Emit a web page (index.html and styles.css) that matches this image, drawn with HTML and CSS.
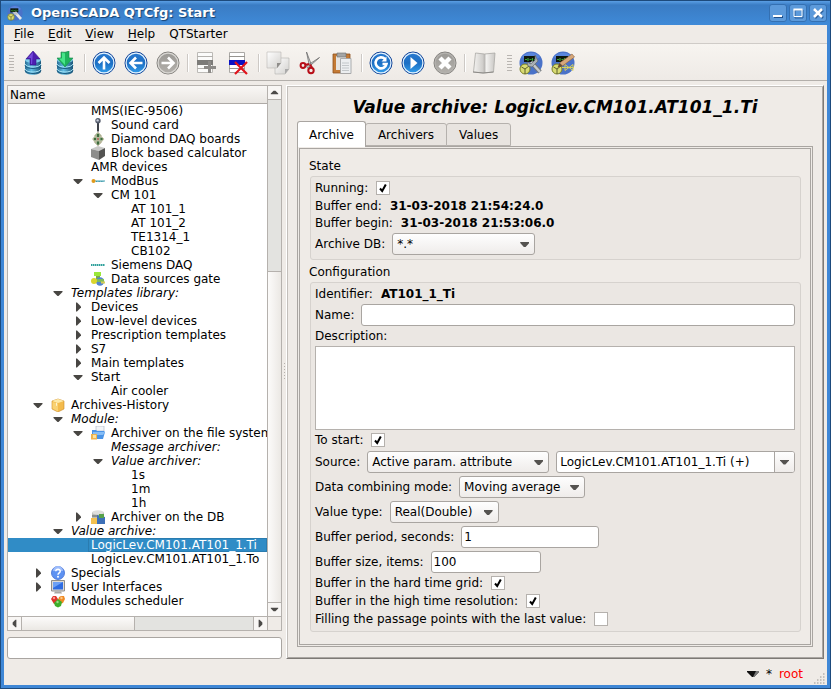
FILE: index.html
```html
<!DOCTYPE html>
<html lang="en">
<head>
<meta charset="utf-8">
<title>OpenSCADA QTCfg: Start</title>
<link rel="stylesheet" href="styles.css">
</head>
<body>
<svg class="defs" aria-hidden="true">
  <defs>
    <linearGradient id="gBlue" x1="0" y1="0" x2="0" y2="1"><stop offset="0" stop-color="#2a7ad0"/><stop offset=".5" stop-color="#1c6fc4"/><stop offset="1" stop-color="#35a2ee"/></linearGradient>
    <linearGradient id="gGrey" x1="0" y1="0" x2="0" y2="1"><stop offset="0" stop-color="#9a9894"/><stop offset="1" stop-color="#b4b1ac"/></linearGradient>
    <linearGradient id="gCyl" x1="0" y1="0" x2="1" y2="0"><stop offset="0" stop-color="#2a6d94"/><stop offset=".4" stop-color="#62bfe6"/><stop offset="1" stop-color="#1d5578"/></linearGradient>
    <linearGradient id="gPaper" x1="0" y1="0" x2="1" y2="1"><stop offset="0" stop-color="#fff"/><stop offset="1" stop-color="#d2d0cd"/></linearGradient>
    <linearGradient id="gBook" x1="0" y1="0" x2="1" y2="0"><stop offset="0" stop-color="#f4f3f1"/><stop offset=".45" stop-color="#cfcdca"/><stop offset=".5" stop-color="#b5b3b0"/><stop offset=".6" stop-color="#f2f1ef"/><stop offset="1" stop-color="#c9c7c4"/></linearGradient>
    <symbol id="cyl" viewBox="0 0 24 24"><path d="M4 9v11c0 5 16 5 16 0V9z" fill="url(#gCyl)"/><ellipse cx="12" cy="9" rx="8" ry="3" fill="#7fcdec"/><path d="M4 13c1 4 15 4 16 0M4 18c1 4 15 4 16 0" fill="none" stroke="#a5e2f5" stroke-width="1"/><path d="M4 14.500c1 4 15 4 16 0M4 19.500c1 4 15 4 16 0" fill="none" stroke="#1c5c82"/></symbol>
    <symbol id="scada" viewBox="0 0 24 24"><circle cx="12" cy="12" r="11.500" fill="#4a72c8"/><path d="M3 6a11.500 11.500 0 0 1 18 0L12 12z" fill="#5a86dd"/><rect x="5" y="5" width="12" height="6" fill="#0d160d"/><path d="M6 8.500h2M9 7v3M10.500 8.500h2M13.500 7v3M15 8.500h1" stroke="#35a235" stroke-width="1.200"/><circle cx="6" cy="18" r="5" fill="#d8db72" stroke="#7b8128"/><path d="M6 18l-3.500-2M6 18l4-3M6 18v5" stroke="#40421c" stroke-width=".8"/></symbol>
    <symbol id="dn" viewBox="0 0 14 14"><path d="M2.500 5h9v1l-4 4h-1l-4-4z" fill="#484643"/></symbol>
    <symbol id="rt" viewBox="0 0 14 14"><path d="M5 2.500h1l4 4v1l-4 4H5z" fill="#484643"/></symbol>
  </defs>
</svg>
<div class="window">
  <header class="titlebar">
    <svg class="app-icon" viewBox="0 0 24 24"><use href="#scada"/><path d="M12 11l9 10" stroke="#e5e8ea" stroke-width="4"/><path d="M8 11l6-1 3 4-5 1z" fill="#bfc4c8"/></svg>
    <h1>OpenSCADA QTCfg: Start</h1>
    <button class="win-btn" aria-label="Minimize"><svg viewBox="0 0 18 18"><path d="M5 13h9" stroke="#1f4f8a" stroke-width="2"/><path d="M4 12h9" stroke="#fff" stroke-width="2"/></svg></button>
    <button class="win-btn" aria-label="Maximize"><svg viewBox="0 0 18 18"><path d="M6 6h8v8H6z" fill="none" stroke="#2a5f9c"/><path d="M5 5.500h8v7H5z" fill="none" stroke="#fff" stroke-width="1"/><path d="M4.500 5.500h9" stroke="#fff" stroke-width="2"/></svg></button>
    <button class="win-btn" aria-label="Close"><svg viewBox="0 0 18 18"><path d="M6 6l8 8m0-8l-8 8" stroke="#2a5f9c" stroke-width="2.500"/><path d="M5 5l8 8m0-8l-8 8" stroke="#fff" stroke-width="2.500"/></svg></button>
  </header>

  <nav class="menubar">
    <button><u>F</u>ile</button>
    <button><u>E</u>dit</button>
    <button><u>V</u>iew</button>
    <button><u>H</u>elp</button>
    <button>QTStarter</button>
  </nav>

  <div class="toolbar">
    <span class="handle"></span>
    <button aria-label="Load from DB"><svg viewBox="0 0 24 24"><use href="#cyl"/><path d="M12 0l7 8h-4v6H9V8H5z" fill="#4c1fb0" stroke="#36148a" stroke-width=".6"/><path d="M12 1l-5 6h3v6h1z" fill="#7347dc"/></svg></button>
    <button aria-label="Save to DB"><svg viewBox="0 0 24 24"><use href="#cyl"/><path d="M8 1q4 1 8-1v7h4l-8 9-8-9h4z" fill="#1fb35c" stroke="#14874a" stroke-width=".6"/><path d="M9 2l3 .3V14L6 7.500h3z" fill="#47e58a"/></svg></button>
    <span class="sep"></span>
    <button aria-label="Up"><svg viewBox="0 0 24 24"><circle cx="12" cy="12" r="11" fill="url(#gBlue)" stroke="#123f92"/><circle cx="12" cy="12" r="9.900" fill="none" stroke="#e4f2fd" stroke-width="1.200"/><path d="M12 18.500V7M6.500 12L12 6.500l5.500 5.500" fill="none" stroke="#fff" stroke-width="2.600"/></svg></button>
    <button aria-label="Back"><svg viewBox="0 0 24 24"><circle cx="12" cy="12" r="11" fill="url(#gBlue)" stroke="#123f92"/><circle cx="12" cy="12" r="9.900" fill="none" stroke="#e4f2fd" stroke-width="1.200"/><path d="M18.500 12H7M12 6.500L6.500 12l5.500 5.500" fill="none" stroke="#fff" stroke-width="2.600"/></svg></button>
    <button aria-label="Forward" disabled><svg viewBox="0 0 24 24"><circle cx="12" cy="12" r="11" fill="url(#gGrey)" stroke="#84827e"/><circle cx="12" cy="12" r="9.900" fill="none" stroke="#d9d7d3" stroke-width="1.200"/><path d="M5.500 12H17M12 6.500l5.500 5.500-5.500 5.500" fill="none" stroke="#fff" stroke-width="2.600"/></svg></button>
    <span class="sep"></span>
    <button aria-label="Add item" disabled><svg viewBox="0 0 24 24"><path d="M2.500 1.500h15v20h-15z" fill="#fbfbfa" stroke="#bcbab6"/><path d="M2 5.500h16M2 17.500h16" stroke="#b3b1ad"/><path d="M2 9h16v5H2z" fill="#7c7b78"/><path d="M14.500 10v12M9 16.500h12" stroke="#8c8a87" stroke-width="3"/></svg></button>
    <button aria-label="Delete item"><svg viewBox="0 0 24 24"><path d="M2.500 1.500h15v20h-15z" fill="#fff" stroke="#aaa8a5"/><path d="M2 5.500h16M2 17.500h16" stroke="#96948f"/><path d="M2 9h16v5H2z" fill="#0a12c4"/><path d="M8 11l12 12m0-12L8 23" stroke="#e0141c" stroke-width="2.200"/></svg></button>
    <span class="sep"></span>
    <button aria-label="Copy" disabled><svg viewBox="0 0 24 24"><path d="M9 7h14v11l-4 5H9z" fill="url(#gPaper)" stroke="#b3b1ae" stroke-width=".6"/><path d="M23 18h-4v5z" fill="#aaa"/><path d="M1 1h14v11l-4 5H1z" fill="url(#gPaper)" stroke="#b8b6b3" stroke-width=".6"/><path d="M15 12h-4v5z" fill="#8f8d8a"/></svg></button>
    <button aria-label="Cut"><svg viewBox="0 0 24 24"><path d="M8.500 1l5 13-2 1.500zM21.500 6.500L8.500 15l1 2z" fill="#d9d9d9" stroke="#6d6d6d" stroke-width=".8"/><path d="M12 13.500l2 3M11 13l-4 1" stroke="#b70d17" stroke-width="2"/><circle cx="5" cy="14.500" r="2.400" fill="none" stroke="#b70d17" stroke-width="2"/><circle cx="13" cy="19.500" r="2.700" fill="none" stroke="#b70d17" stroke-width="2"/></svg></button>
    <button aria-label="Paste"><svg viewBox="0 0 24 24"><path d="M3 3h17v19H3z" fill="#c47a34" stroke="#8d5220" stroke-width=".8"/><path d="M6 5h10v14H6z" fill="#e6e4e1"/><path d="M7 2h9v4H7z" fill="#a4a5a5" stroke="#6b6b6b" stroke-width=".6"/><path d="M10.500 7.500h10.500v15H10.500z" fill="#eceef0" stroke="#9b9d9f" stroke-width=".8"/><path d="M12 12h7M12 14.500h7M12 17h7M12 19.500h7" stroke="#b9bcc0" stroke-width=".8"/></svg></button>
    <span class="sep"></span>
    <button aria-label="Refresh"><svg viewBox="0 0 24 24"><circle cx="12" cy="12" r="11" fill="url(#gBlue)" stroke="#123f92"/><circle cx="12" cy="12" r="9.900" fill="none" stroke="#e4f2fd" stroke-width="1.200"/><path d="M16 8a5.500 5.500 0 1 0 1.500 5h-4" fill="none" stroke="#fff" stroke-width="2.600"/><path d="M17.500 5.500v5h-5z" fill="#fff"/></svg></button>
    <button aria-label="Start cyclic refresh"><svg viewBox="0 0 24 24"><circle cx="12" cy="12" r="11" fill="url(#gBlue)" stroke="#123f92"/><circle cx="12" cy="12" r="9.900" fill="none" stroke="#e4f2fd" stroke-width="1.200"/><path d="M9.500 6v12l7-6z" fill="#fff"/></svg></button>
    <button aria-label="Stop" disabled><svg viewBox="0 0 24 24"><circle cx="12" cy="12" r="11" fill="url(#gGrey)" stroke="#84827e"/><circle cx="12" cy="12" r="9.900" fill="none" stroke="#b4b2ae" stroke-width="1.200"/><path d="M7 7l10 10m0-10L7 17" stroke="#fff" stroke-width="4.400"/></svg></button>
    <span class="sep"></span>
    <button aria-label="Manual" disabled><svg viewBox="0 0 24 24"><path d="M3.500 2l9 1 10.500-1-1.500 19-10 1-10-1z" fill="url(#gBook)" stroke="#aaa8a5" stroke-width=".8"/><path d="M1 21l10 1 10.500-1" stroke="#8b8986" fill="none"/></svg></button>
    <span class="handle second"></span>
    <button aria-label="Configurator"><svg viewBox="0 0 24 24"><use href="#scada"/><path d="M12 11l9 10" stroke="#6f7479" stroke-width="4.500"/><path d="M12 11l9 10" stroke="#c6cacd" stroke-width="2.500"/><path d="M16 4v5l-4 4-4-2 1 4 4 1 6-6z" fill="#aab0b5" stroke="#5b6066" stroke-width=".6"/></svg></button>
    <button aria-label="Visual development"><svg viewBox="0 0 24 24"><use href="#scada"/><path d="M11 16.500h12M14 13.500v6l4-3 4 3v-6l-4 3z" fill="none" stroke="#d6d05a"/><path d="M21 3l2.500 3-12 9-3-3z" fill="#d6a77a" stroke="#8f6239" stroke-width=".6"/><path d="M8.500 12l-2 4.500 5-1.500z" fill="#6f4a2a"/></svg></button>
  </div>

  <main class="body">
    <section class="side">
      <div class="tree-box">
        <div class="tree-col">
          <div class="tree-head">Name</div>
          <ul class="tree" role="tree">
            <li class="l3">MMS(IEC-9506)</li>
            <li class="l3"><svg class="ic" viewBox="0 0 14 14"><path d="M7 4v9.500" stroke="#3c4048" stroke-width="2"/><circle cx="7" cy="2.800" r="2.700" fill="#555c6c"/><circle cx="6.600" cy="2.400" r="1.200" fill="#c8cedb"/></svg>Sound card</li>
            <li class="l3"><svg class="ic" viewBox="0 0 14 14"><path d="M7 0l3.500 3.500L7 7 3.500 3.500zM4 4l4 3-4 3.500L1.500 7zM10 4l3 3-3 3.500L6 7zM7 7l3.500 3.500L7 14l-3.500-3.500z" fill="#9fb594" stroke="#c7b8a0" stroke-width=".6"/><path d="M6 2h2v3H6zM3 6h2v2H3zM9.500 6h2v2h-2zM6 9.500h2v3H6z" fill="#3e6b3c"/><path d="M6 6h2v2H6z" fill="#b4756a"/></svg>Diamond DAQ boards</li>
            <li class="l3"><svg class="ic" viewBox="0 0 14 14"><path d="M0 3l7-3 7 2-6 3z" fill="#c9c9c7"/><path d="M0 3l8 2v9l-8-3z" fill="#8d8d8b"/><path d="M8 5l6-3v8l-6 4z" fill="#545452"/></svg>Block based calculator</li>
            <li class="l3">AMR devices</li>
            <li class="l3"><svg class="ar"><use href="#dn"/></svg><svg class="ic" viewBox="0 0 14 14"><path d="M3 7h11" stroke="#7fc0cb" stroke-width="1.500"/><path d="M5 7.500h8" stroke="#3794a8" stroke-dasharray="1 .6"/><circle cx="2.500" cy="7" r="2" fill="#e09a1c"/></svg>ModBus</li>
            <li class="l4"><svg class="ar"><use href="#dn"/></svg>CM 101</li>
            <li class="l5">AT 101_1</li>
            <li class="l5">AT 101_2</li>
            <li class="l5">TE1314_1</li>
            <li class="l5">CB102</li>
            <li class="l3"><svg class="ic" viewBox="0 0 14 14"><path d="M0 7h14" stroke="#2fa09b" stroke-width="2" stroke-dasharray="1.500 .5"/></svg>Siemens DAQ</li>
            <li class="l3"><svg class="ic" viewBox="0 0 14 14"><path d="M3 0h7v4H3z" fill="#9be83a"/><path d="M5 4h4v3H5z" fill="#7cab48"/><circle cx="9" cy="9.500" r="4.200" fill="#5584cf"/><path d="M5 7h8v3H5z" fill="#7dbb5c"/><circle cx="3" cy="9" r="3" fill="#d9d52c"/><path d="M10 9.500h4v2h-4z" fill="#d6cd57"/></svg>Data sources gate</li>
            <li class="l2"><svg class="ar"><use href="#dn"/></svg><i>Templates library:</i></li>
            <li class="l3"><svg class="ar"><use href="#rt"/></svg>Devices</li>
            <li class="l3"><svg class="ar"><use href="#rt"/></svg>Low-level devices</li>
            <li class="l3"><svg class="ar"><use href="#rt"/></svg>Prescription templates</li>
            <li class="l3"><svg class="ar"><use href="#rt"/></svg>S7</li>
            <li class="l3"><svg class="ar"><use href="#rt"/></svg>Main templates</li>
            <li class="l3"><svg class="ar"><use href="#dn"/></svg>Start</li>
            <li class="l4">Air cooler</li>
            <li class="l1"><svg class="ar"><use href="#dn"/></svg><svg class="ic" viewBox="0 0 14 14"><path d="M1 3l6-2 6 2v8l-6 3-6-3z" fill="#f4bb4c" stroke="#c98a26" stroke-width=".6"/><path d="M1 3l6-2 6 2-6 2z" fill="#fde9a8"/><path d="M1.500 4L7 5.500v8l-5.500-3z" fill="#f9d274"/><path d="M5 4.500v3l1 .5V5z" fill="#fff3cf"/></svg>Archives-History</li>
            <li class="l2"><svg class="ar"><use href="#dn"/></svg><i>Module:</i></li>
            <li class="l3"><svg class="ar"><use href="#dn"/></svg><svg class="ic" viewBox="0 0 14 14"><path d="M5 0h8v5H5z" fill="#f3f5f8" stroke="#aab4c4" stroke-width=".6"/><path d="M1 4h4l1 1h7l1 1-2 7H1z" fill="#4b94e6"/><path d="M2 6h12l-2 3H2z" fill="#86bdf6"/><path d="M0 8h6v5.500H0z" fill="#f0b450"/><path d="M2 9h3v3H2z" fill="#fbe3a0"/></svg>Archiver on the file system</li>
            <li class="l4"><i>Message archiver:</i></li>
            <li class="l4"><svg class="ar"><use href="#dn"/></svg><i>Value archiver:</i></li>
            <li class="l5">1s</li>
            <li class="l5">1m</li>
            <li class="l5">1h</li>
            <li class="l3"><svg class="ar"><use href="#rt"/></svg><svg class="ic" viewBox="0 0 14 14"><path d="M1 2v10c0 2 12 2 12 0V2z" fill="#b9bcba"/><ellipse cx="7" cy="2.500" rx="6" ry="2.200" fill="#dedfdc"/><path d="M1 5h6v2H1z" fill="#8a8f8c"/><path d="M6 5l8 2v7H6z" fill="#3c70b8"/><path d="M8 4h5v4H8z" fill="#57a14a"/><path d="M0 8h6v6H0z" fill="#f3c14f"/></svg>Archiver on the DB</li>
            <li class="l2"><svg class="ar"><use href="#dn"/></svg><i>Value archive:</i></li>
            <li class="l3 selected" aria-selected="true"><span>LogicLev.CM101.AT101_1.Ti</span></li>
            <li class="l3">LogicLev.CM101.AT101_1.To</li>
            <li class="l1"><svg class="ar"><use href="#rt"/></svg><svg class="ic" viewBox="0 0 14 14"><circle cx="7" cy="7" r="6.500" fill="#5e92f2" stroke="#3d6bd0" stroke-width=".8"/><path d="M2 5a5 5 0 0 1 10 0z" fill="#9dbcfb"/><path d="M4.800 5.300c0-3 4.600-2.700 4.400 0C9.200 7 7 6.800 7 8.800" fill="none" stroke="#fff" stroke-width="1.500"/><circle cx="7" cy="10.800" r="1" fill="#fff"/></svg>Specials</li>
            <li class="l1"><svg class="ar"><use href="#rt"/></svg><svg class="ic" viewBox="0 0 14 14"><path d="M.5.500h13v10.500H.5z" fill="#dcdad6" stroke="#8e8d8a"/><path d="M2 2h10v7.500H2z" fill="#2e6ce2"/><path d="M2 2h10L2 8z" fill="#6ca0f5"/><path d="M4 11.500h6l1 2H3z" fill="#a9a7a3"/></svg>User Interfaces</li>
            <li class="l1"><svg class="ic" viewBox="0 0 14 14"><path d="M0 5l2-3h3l2 3-1 4-3 1z" fill="#e0322a"/><path d="M8 3l2-1h3l1 3-2 4-3 1-2-4z" fill="#f08a24"/><path d="M7 5l4 3-1 4-3 1.500L4 12l-1-3z" fill="#3fae2c"/><circle cx="3" cy="4" r="1.200" fill="#f89a90"/><circle cx="10.500" cy="4" r="1.200" fill="#fbc98a"/><circle cx="6.500" cy="8" r="1.200" fill="#98dc86"/></svg>Modules scheduler</li>
          </ul>
        </div>
        <div class="vscroll"><button aria-label="Scroll up"><svg viewBox="0 0 14 14"><path d="M3 9h8v-1L8 5H6L3 8z" fill="#4c4a48"/></svg></button><span class="track"><span class="thumb"></span></span><button aria-label="Scroll down"><svg viewBox="0 0 14 14"><path d="M3 5h8v1L8 9H6L3 6z" fill="#4c4a48"/></svg></button></div>
        <div class="hscroll"><button aria-label="Scroll left"><svg viewBox="0 0 14 14"><path d="M9 3v8H8L5 8V6l3-3z" fill="#4c4a48"/></svg></button><span class="track"><span class="thumb"></span></span><button aria-label="Scroll right"><svg viewBox="0 0 14 14"><path d="M5 3v8h1l3-3V6L6 3z" fill="#4c4a48"/></svg></button></div>
        <div class="corner"></div>
      </div>
      <input class="field filter" type="text" aria-label="Filter">
    </section>
    <div class="splitter"></div>
    <section class="page">
      <h2>Value archive: LogicLev.CM101.AT101_1.Ti</h2>
      <div class="tabs" role="tablist">
        <button role="tab" class="active" aria-selected="true">Archive</button>
        <button role="tab">Archivers</button>
        <button role="tab">Values</button>
      </div>
      <div class="pane">
        <div class="pane-in">
          <h3>State</h3>
          <div class="group">
            <div class="row check"><label for="run">Running:</label><input id="run" type="checkbox" checked></div>
            <div class="row text">Buffer end: <b>31-03-2018 21:54:24.0</b></div>
            <div class="row text">Buffer begin: <b>31-03-2018 21:53:06.0</b></div>
            <div class="row ctl"><label for="adb">Archive DB:</label><span class="combo w-db"><select id="adb"><option>*.*</option></select></span></div>
          </div>
          <h3>Configuration</h3>
          <div class="group">
            <div class="row text">Identifier: <b>AT101_1_Ti</b></div>
            <div class="row ctl"><label for="nm">Name:</label><input id="nm" class="field grow" type="text"></div>
            <div class="row desc"><label for="ds">Description:</label></div>
            <textarea id="ds"></textarea>
            <div class="row check"><label for="ts">To start:</label><input id="ts" type="checkbox" checked></div>
            <div class="row ctl"><label for="src">Source:</label><span class="combo w-src"><select id="src"><option>Active param. attribute</option></select></span><span class="edit-combo"><input type="text" aria-label="Source parameter" value="LogicLev.CM101.AT101_1.Ti (+)"><button aria-label="Show variants"></button></span></div>
            <div class="row ctl"><label for="dc">Data combining mode:</label><span class="combo w-comb"><select id="dc"><option>Moving average</option></select></span></div>
            <div class="row ctl"><label for="vt">Value type:</label><span class="combo w-type"><select id="vt"><option>Real(Double)</option></select></span></div>
            <div class="row ctl"><label for="bp">Buffer period, seconds:</label><input id="bp" class="field w-per" type="text" value="1"></div>
            <div class="row ctl"><label for="bs">Buffer size, items:</label><input id="bs" class="field w-size" type="text" value="100"></div>
            <div class="row check"><label for="hg">Buffer in the hard time grid:</label><input id="hg" type="checkbox" checked></div>
            <div class="row check"><label for="hr">Buffer in the high time resolution:</label><input id="hr" type="checkbox" checked></div>
            <div class="row check"><label for="fl">Filling the passage points with the last value:</label><input id="fl" type="checkbox"></div>
          </div>
        </div>
      </div>
    </section>
  </main>

  <footer class="status">
    <svg class="st-arrow" viewBox="0 0 12 8"><path d="M0 1h12v1L7 7H5L0 2z" fill="#111"/><path d="M12 1v1L7 7h-1l3-6z" fill="#777"/></svg>
    <span>*</span>
    <span class="user">root</span>
    <svg class="grip" viewBox="0 0 12 12"><path d="M9 1h2M6 4h5M3 7h8M0 10h11" stroke="#b5b2ae" stroke-width="1.500" stroke-dasharray="1.500 1.500"/></svg>
  </footer>
</div>
</body>
</html>
```
FILE: styles.css
```css
* { box-sizing: border-box; }
body { margin: 0; font: 12px/14px "DejaVu Sans", Verdana, sans-serif; color: #000; background: #efebe7; }
button, input, select, textarea { font: inherit; color: inherit; margin: 0; padding: 0; border-radius: 0; }
button { border: 0; background: none; }
h1, h2, h3, ul { margin: 0; padding: 0; }
svg { display: block; flex: none; }
.defs { position: absolute; width: 0; height: 0; }

.window {
  min-height: 100vh; display: flex; flex-direction: column;
  border: 1px solid #1d4a7c;
  box-shadow: inset 0 0 0 3px #3f87d6;
  padding: 0 3px 3px;
}
.titlebar {
  height: 24px; display: flex; align-items: center; gap: 2px; padding: 0 3px; margin: 0 -3px;
  background: linear-gradient(#5a9ee4, #3a7cc4 4px, #3f8ad8);
}
.app-icon { width: 16px; height: 16px; margin: 0 6px 0 3px; }
.titlebar h1 { flex: 1; font-size: 13px; line-height: 16px; color: #fff; text-shadow: 1px 1px 1px #17406f; white-space: nowrap; }
.win-btn { width: 18px; height: 18px; background: #5c9adb; border: 1px solid #3470b2; border-radius: 3px; }
.win-btn svg { width: 18px; height: 18px; margin: -1px; }

.menubar { height: 19px; display: flex; align-items: center; border-bottom: 1px solid #cfcbc7; padding-left: 3px; }
.menubar button { padding: 0 7px; }
.menubar u { text-underline-offset: 2px; }

.toolbar { height: 37px; display: flex; align-items: center; padding: 2px 0 0 5px; background: linear-gradient(#f7f4f0, #eeeae6); border-bottom: 1px solid #b3afab; }
.toolbar button { width: 32px; height: 32px; display: grid; place-items: center; }
.toolbar button svg { width: 24px; height: 24px; }
.sep { width: 7px; height: 18px; background: linear-gradient(90deg, transparent 3px, #cdc9c5 3px, #cdc9c5 4px, #fff 4px, #fff 5px, transparent 5px); }
.handle { width: 8px; height: 18px; background: radial-gradient(circle, #b9b5b1 34%, transparent 40%) 0 0 / 2px 3px; background-clip: content-box; padding-right: 3px; }
.second { margin-left: 7px; }

.body { flex: 1; display: flex; padding: 4px 3px 0; }
.side { width: 275px; flex: none; display: flex; flex-direction: column; gap: 6px; }
.tree-box { flex: 1; display: grid; grid-template: 1fr 14px / minmax(0, 1fr) 14px; border: 1px solid #b5b1ad; background: #fff; }
.tree-col { overflow: hidden; }
.tree-head { height: 18px; padding: 2px; background: linear-gradient(#f9f7f5, #e9e6e2); border-bottom: 1px solid #aeaaa6; }
.tree { list-style: none; }
.tree li { height: 14px; display: flex; align-items: center; white-space: nowrap; }
.l1 { padding-left: 43px; }
.l2 { padding-left: 63px; }
.l3 { padding-left: 83px; }
.l4 { padding-left: 103px; }
.l5 { padding-left: 123px; }
.ar { width: 14px; height: 14px; margin: 0 6px 0 -20px; }
.ic { width: 14px; height: 14px; margin-right: 6px; }
.selected { background: #308cc6; color: #fff; }
.selected span { flex: 1; margin-left: -3px; padding-left: 2px; line-height: 12px; border: 1px solid #2a7cb0; }

.vscroll, .hscroll { display: flex; background: #e3e3e0; }
.vscroll { flex-direction: column; border-left: 1px solid #b5b1ad; }
.hscroll { border-top: 1px solid #b5b1ad; }
.vscroll button { height: 14px; border: solid #b5b1ad; border-width: 0 0 1px; background: #f8f6f4; }
.vscroll button:last-child { border-width: 1px 0 0; }
.hscroll button { width: 14px; border: solid #b5b1ad; border-width: 0 1px 0 0; background: #f8f6f4; }
.hscroll button:last-child { border-width: 0 0 0 1px; }
.vscroll svg, .hscroll svg { width: 13px; height: 13px; }
.track { flex: 1; display: flex; }
.vscroll .track { flex-direction: column; justify-content: flex-end; }
.vscroll .thumb { height: 66%; border-top: 1px solid #b5b1ad; background: linear-gradient(90deg, #fcfbfa, #ebe8e4); }
.hscroll .thumb { width: 49%; border-right: 1px solid #b5b1ad; background: linear-gradient(#fcfbfa, #ebe8e4); }
.corner { border: solid #b5b1ad; border-width: 1px 0 0 1px; background: #efebe7; }

.field { height: 22px; border: 1px solid #a9a5a1; border-radius: 3px; background: #fff; padding: 0 2px; }
.filter { width: 100%; }
.splitter { width: 4px; align-self: center; height: 18px; background: linear-gradient(#b5b1ad 1px, transparent 1px) 0 0 / 3px 3px; background-clip: content-box; padding: 0 1px 0 2px; }

.page {
  flex: 1; min-width: 0; display: flex; flex-direction: column; padding: 12px 10px 11px;
  border: 1px solid; border-color: #fff #7d7975 #7d7975 #fff;
  box-shadow: inset 1px 1px #c3bfbb, inset -1px -1px #aaa6a2;
}
.page h2 { font-size: 17px; line-height: 18px; font-style: italic; text-align: center; }
.tabs { display: flex; align-items: flex-end; height: 30px; }
.tabs button { height: 23px; margin-left: -1px; padding: 0 12px; border: 1px solid #b5b1ad; border-radius: 3px 3px 0 0; background: #e8e4e0; }
.tabs .active { position: relative; height: 26px; margin: 0 0 -1px; padding: 0 11px; background: #fff; border-color: #a9a5a1; border-bottom: 0; }
.pane { flex: 1; display: flex; border: 1px solid #a9a5a1; padding: 1px; }
.pane-in { flex: 1; min-width: 0; border: 1px solid #a9a5a1; padding: 9px 9px 12px; }
h3 { font-size: 12px; line-height: 16px; font-weight: normal; }
.group { margin: 2px 0 0 1px; padding: 2px 5px 3px 4px; border: 1px solid #d6d2ce; border-radius: 3px; background: #ebe7e3; }
.group + h3 { margin-top: 4px; }
.row { display: flex; align-items: center; gap: 7px; white-space: nowrap; }
.text, .check { gap: 8px; }
.text { height: 17px; }
.check { height: 18px; }
.desc { height: 18px; }
.ctl { height: 25px; padding: 2px 0 1px; }
.grow { flex: 1; min-width: 0; }
textarea { display: block; width: 100%; height: 84px; margin: 1px 0; border: 1px solid #b5b1ad; background: #fff; resize: none; }
input[type="checkbox"] {
  appearance: none; width: 14px; height: 14px; border: 1px solid #b5b1ad; background: #fff;
}
input[type="checkbox"]:checked {
  background: #fff url("data:image/svg+xml,%3Csvg xmlns='http://www.w3.org/2000/svg' viewBox='0 0 12 12'%3E%3Cpath d='M3 6.500l2.200 2.500L8.800 2.500' fill='none' stroke='%23000' stroke-width='2'/%3E%3C/svg%3E");
}
.combo { position: relative; height: 22px; }
.combo select { appearance: none; width: 100%; height: 22px; padding: 0 20px 0 4px; border: 1px solid #a9a5a1; border-radius: 3px; background: linear-gradient(#fefefe, #efecea); }
.combo::after, .edit-combo button::after { content: ""; width: 9px; height: 5px; background: #555350; clip-path: polygon(0 0, 100% 0, 100% 20%, 60% 100%, 40% 100%, 0 20%); }
.combo::after { position: absolute; right: 6px; top: 9px; pointer-events: none; }
.w-db { width: 143px; }
.w-src { width: 182px; }
.w-comb { width: 126px; }
.w-type { width: 109px; }
.w-per { width: 138px; }
.w-size { width: 110px; }
.edit-combo { flex: 1; min-width: 0; height: 22px; display: flex; border: 1px solid #a9a5a1; border-radius: 3px; background: #fff; overflow: hidden; }
.edit-combo input { flex: 1; min-width: 0; border: 0; padding: 0 3px; background: none; }
.edit-combo button { width: 20px; display: grid; place-items: center; border-left: 1px solid #a9a5a1; background: linear-gradient(#fefefe, #efecea); }

.status { height: 26px; display: flex; align-items: center; justify-content: flex-end; gap: 7px; padding-top: 4px; }
.st-arrow { width: 12px; height: 8px; }
.user { color: #f00; }
.grip { width: 12px; height: 12px; align-self: flex-end; margin-left: 4px; margin-right: 1px; }
```
